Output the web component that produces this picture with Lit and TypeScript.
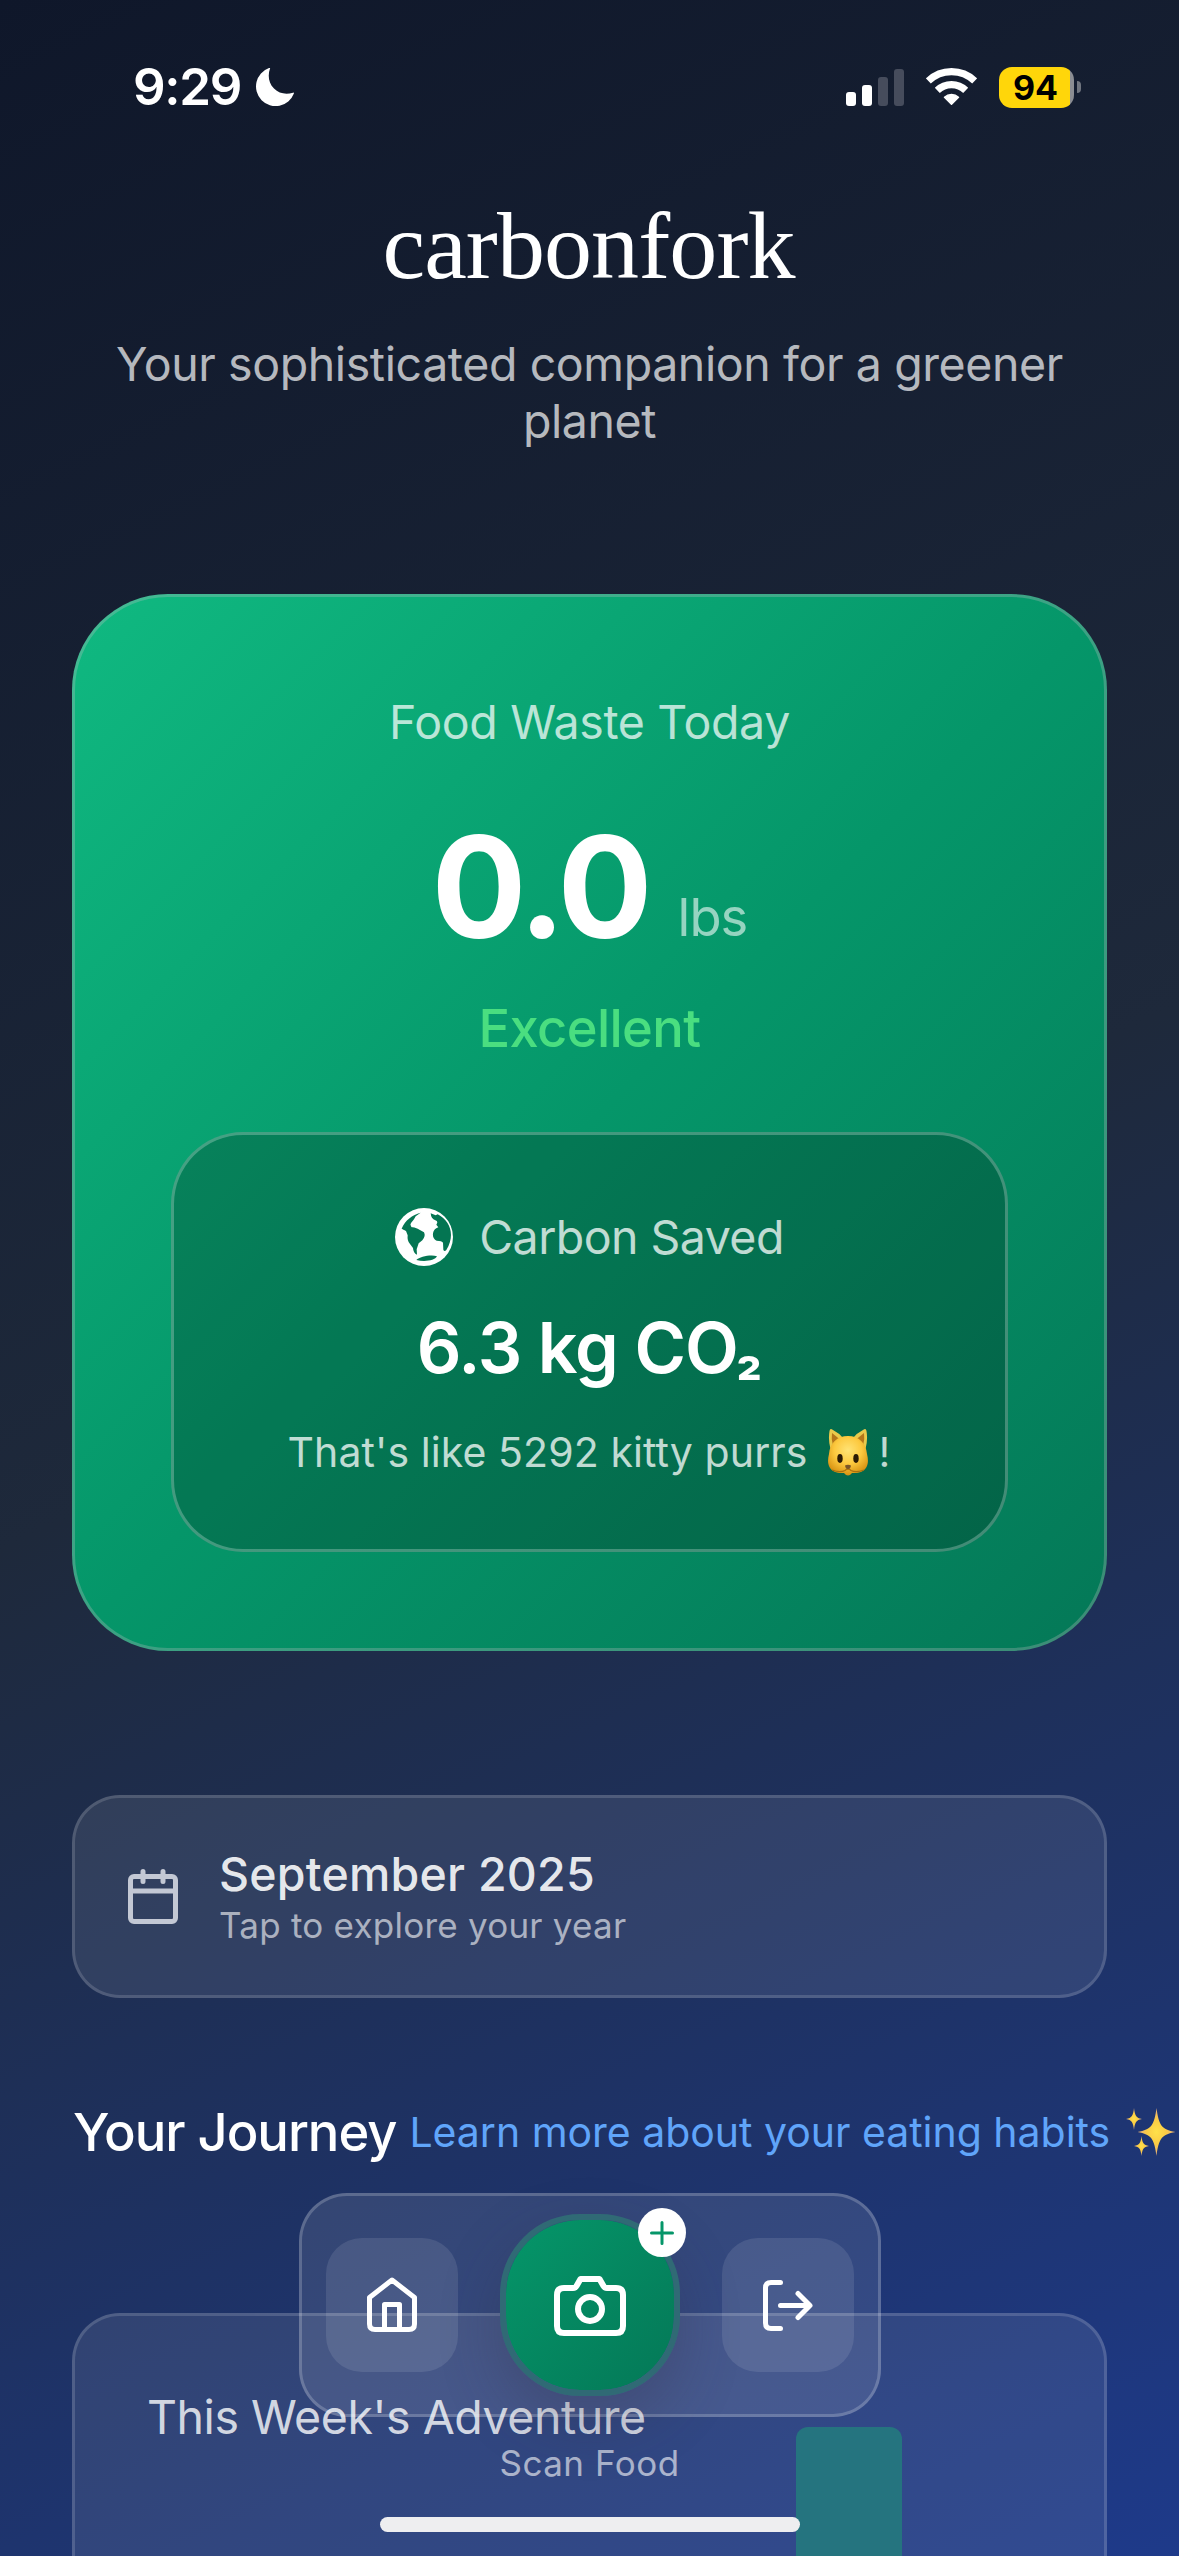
import { LitElement, html, css, svg } from "lit";
import { customElement } from "lit/decorators.js";

const moon = html`<svg class="moon" width="39" height="39" viewBox="0 0 39 39" fill="#fff">
  <path d="M15 .6C15.400-.2 14.600-.3 14 0A19.600 19.600 0 1 0 38.900 25.500C39 24.600 38.600 24.400 38 24.700C31 27 24 25.600 19 20.600C13.500 15.200 12.600 7.500 15 .6Z" /></svg>`;

const signal = html`<svg width="58" height="37" viewBox="0 0 58 37" fill="#fff">
  <rect x="0" y="23" width="10" height="14" rx="3" /><rect x="16" y="16" width="10" height="21" rx="3" />
  <rect x="32" y="8" width="10" height="29" rx="3" fill="#464c5c" /><rect x="48" y="0" width="10" height="37" rx="3" fill="#464c5c" /></svg>`;

const wifi = html`<svg width="51" height="38" viewBox="0 0 51 38" fill="none" stroke="#fff">
  <path d="M2.300 13A33.400 33.400 0 0 1 48.700 13" stroke-width="7.200" />
  <path d="M11.300 22.300A20.400 20.400 0 0 1 39.700 22.300" stroke-width="7.200" />
  <path d="M18.500 29.200A10.700 10.700 0 0 1 32.500 29.200L25.500 36.300Z" fill="#fff" stroke-width="1.500" stroke-linejoin="round" /></svg>`;

const globe = html`<svg width="58" height="58" viewBox="0 0 174 174">
  <circle cx="87" cy="87" r="87" fill="#fff" />
  <g fill="#047552">
    <path d="M77 14C52 20 30 37 20 62L35 66Q44 64 49 56Q44 50 48 45L57 34L62 25Z" />
    <path d="M20 62L36 58Q54 54 68 62L87 73Q93 84 82 97L71 106L65 124L66 140Q55 136 54 120L45 108Q36 99 38 82L33 69Z" />
    <path d="M107 16L122 22L128 19C165 38 182 80 154 126Q148 132 145 125L144 104Q141 98 125 98Q112 92 114 76Q116 63 130 58L124 50Q131 40 121 37Q108 32 107 16Z" />
    <path d="M64 156C74 146 108 139 126 145C120 158 88 162 64 156Z" />
  </g></svg>`;

const cat = html`<svg class="cat" width="42" height="48" viewBox="0 0 42 48">
  <defs>
    <radialGradient id="fur" cx="50%" cy="36%" r="62%"><stop offset="0" stop-color="#ffe375" /><stop offset=".55" stop-color="#fdc93f" /><stop offset="1" stop-color="#d99514" /></radialGradient>
  </defs>
  <path d="M2.500 3Q3-.5 6 2Q12 5 16 10H26Q30 5 36 2Q39-.5 39.500 3Q41 12 38.500 21H3.500Q1 12 2.500 3Z" fill="#e9c94b" />
  <path d="M5 5Q10 9 13.500 12L6 18Q4 11 5 5ZM37 5Q32 9 28.500 12L36 18Q38 11 37 5Z" fill="#b5761a" />
  <path d="M21 8C32 8 39 15 40 26C42 34 41 40 35 43.500C31 45.500 27 45 25 45Q21 50 17 45C15 45 11 45.500 7 43.500C1 40 0 34 2 26C3 15 10 8 21 8Z" fill="url(#fur)" />
  <path d="M5 42Q13 45 18 42.500L21 40L24 42.500Q29 45 37 42M21 40V42" fill="none" stroke="#a8700f" stroke-width="1.200" />
  <ellipse cx="13" cy="30.500" rx="2.700" ry="4.400" fill="#2c1a04" /><ellipse cx="29" cy="30.500" rx="2.700" ry="4.400" fill="#2c1a04" />
  <path d="M18 37.500Q21 36 24 37.500Q23.500 41 21 41Q18.500 41 18 37.500Z" fill="#7b5528" /></svg>`;

const star = (x: number, y: number, r: number, h: number) => svg`<path fill="url(#spark)"
  d=${`M${x} ${y - h}C${x + r * 0.12} ${y - h * 0.3} ${x + r * 0.25} ${y - h * 0.1} ${x + r} ${y}C${x + r * 0.25} ${y + h * 0.1} ${x + r * 0.12} ${y + h * 0.3} ${x} ${y + h}C${x - r * 0.12} ${y + h * 0.3} ${x - r * 0.25} ${y + h * 0.1} ${x - r} ${y}C${x - r * 0.25} ${y - h * 0.1} ${x - r * 0.12} ${y - h * 0.3} ${x} ${y - h}Z`} />`;

const sparkles = html`<svg class="sparkles" width="50" height="48" viewBox="0 0 50 48">
  <defs><radialGradient id="spark"><stop offset="0" stop-color="#ffe14a" /><stop offset=".5" stop-color="#fbcb45" /><stop offset="1" stop-color="#e8b080" /></radialGradient></defs>
  ${star(30.5, 24, 19, 24)}${star(8, 11, 8, 11)}${star(15.5, 38, 7.5, 10)}</svg>`;

const calendar = html`<svg class="calendar" width="50" height="55" viewBox="0 0 50 55" fill="none" stroke="#c3c8d4" stroke-width="5">
  <rect x="2.500" y="7.500" width="45" height="45" rx="3.500" /><path d="M3 22H47" /><path d="M15 2.500V12.500M35 2.500V12.500" stroke-linecap="round" /></svg>`;

const home = html`<svg width="50" height="56" viewBox="0 0 50 56" fill="none" stroke="#fff" stroke-width="5" stroke-linejoin="round">
  <path d="M2.500 20.500L25 3L47.500 20.500V47Q47.500 52.500 42 52.500H8Q2.500 52.500 2.500 47Z" /><path d="M17.500 52V27.500H32.500V52" /></svg>`;

const logout = html`<svg width="50" height="51" viewBox="0 0 50 51" fill="none" stroke="#fff" stroke-width="5" stroke-linecap="round" stroke-linejoin="round">
  <path d="M17.500 2.500H8Q2.500 2.500 2.500 8V43Q2.500 48.500 8 48.500H17.500" /><path d="M17.500 25.500H46.500M35 13.500L47 25.500L35 37.500" /></svg>`;

const camera = html`<svg class="camera" width="72" height="60" viewBox="0 0 72 60" fill="none" stroke="#fff" stroke-width="6" stroke-linejoin="round">
  <path d="M10 12H19Q21.500 12 22.500 10L26.500 3H45.500L49.500 10Q50.500 12 53 12H62Q69 12 69 19V50Q69 57 62 57H10Q3 57 3 50V19Q3 12 10 12Z" /><circle cx="36" cy="33" r="12" /></svg>`;

const plus = html`<svg width="24" height="24" viewBox="0 0 24 24" stroke="#059669" stroke-width="3" stroke-linecap="round"><path d="M12 1.500V22.500M1.500 12H22.500" /></svg>`;

@customElement("app-root")
export class AppRoot extends LitElement {
  static styles = css`
    :host {
      display: block;
      position: relative;
      width: 1179px;
      height: 2556px;
      overflow: hidden;
      box-sizing: border-box;
      background: linear-gradient(155.240deg, #0f172a 0%, #1e293b 50%, #1e3a8a 100%);
      color: #fff;
      font-family: Inter, "Liberation Sans", sans-serif;
      white-space: nowrap;
    }
    * { box-sizing: border-box; }
    svg { display: block; flex: none; }
    .page { display: flex; flex-direction: column; height: 2556px; }
    .page > * { flex-shrink: 0; }
    .status { display: flex; align-items: center; height: 118px; padding: 57px 98px 1px 133px; }
    .time { font: 600 51px/60px Inter, sans-serif; letter-spacing: -1.300px; }
    .moon { margin-left: 14px; }
    .indicators { display: flex; align-items: center; gap: 22px; margin-left: auto; }
    .battery { display: flex; align-items: center; gap: 3px; }
    .cell { width: 75px; height: 41px; border-radius: 13px; background: linear-gradient(90deg, #ffd60a 71px, #8b8d92 71px); color: #000;
      font: 700 34px/42px Inter, sans-serif; padding-left: 14px; }
    .nub { width: 4px; height: 12px; border-radius: 0 6px 6px 0; background: #70757f; }

    .hero { display: flex; flex-direction: column; align-items: center; margin-top: 78px; }
    .brand { margin: 0; padding-right: 2px; font: 400 96px/100px "Liberation Serif", serif; letter-spacing: -0.900px; }
    .tagline { margin: 40px 0 0; width: 1035px; white-space: normal; text-align: center; font-size: 46.500px; line-height: 57px;
      letter-spacing: -0.400px; color: rgba(255, 255, 255, 0.700); }

    .waste { margin: 144px 72px 0; height: 1057px; padding: 97px 96px 0; border: 3px solid rgba(205, 195, 200, 0.280); border-radius: 96px;
      background: linear-gradient(135deg, #10b981, #059669 50%, #047857) border-box; display: flex; flex-direction: column; align-items: center; }
    .label { font-size: 46.500px; line-height: 57px; letter-spacing: -0.330px; color: rgba(255, 255, 255, 0.720); }
    .amount { display: flex; align-items: baseline; margin-top: 51px; height: 170px; }
    .number { font-size: 141px; line-height: 170px; font-weight: 700; letter-spacing: -4px; }
    .unit { position: relative; top: -2px; margin-left: 29px; font-size: 52.500px; line-height: 64px; letter-spacing: -0.930px; color: rgba(255, 255, 255, 0.580); }
    .rating { margin-top: 24px; font-size: 52.500px; line-height: 64px; font-weight: 500; letter-spacing: -0.640px; color: #4ade80; }
    .carbon { align-self: stretch; margin-top: 72px; height: 420px; padding-top: 73px; border: 3px solid rgba(255, 255, 255, 0.250);
      border-radius: 72px; background: rgba(0, 0, 0, 0.200); display: flex; flex-direction: column; align-items: center; }
    .saved { display: flex; align-items: center; gap: 26px; height: 58px; font-size: 46.500px; letter-spacing: -0.550px; color: rgba(255, 255, 255, 0.750); }
    .kg { display: flex; margin-top: 39px; padding-right: 1px; font-size: 70px; line-height: 86px; font-weight: 600; letter-spacing: -1.050px; white-space: pre; }
    .sub { margin-left: -2px; font-size: 58px; line-height: 90px; height: 86px; font-weight: 700; }
    .purrs { display: flex; align-items: center; margin-top: 34px; padding-right: 1px; font-size: 41px; line-height: 54px; letter-spacing: 0.090px; color: rgba(255, 255, 255, 0.750); }
    .cat { margin: 0 10px 0 19px; }

    .month { margin: 144px 72px 0; height: 203px; display: flex; align-items: center; gap: 41px; padding-left: 53px;
      border: 3px solid rgba(255, 255, 255, 0.150); border-radius: 48px; background: rgba(255, 255, 255, 0.085); }
    .when { display: flex; flex-direction: column; gap: 1px; }
    .name { font-size: 46.500px; line-height: 57px; font-weight: 500; letter-spacing: 0.240px; color: rgba(255, 255, 255, 0.900); }
    .hint { font-size: 35px; line-height: 43px; letter-spacing: 0.240px; color: rgba(255, 255, 255, 0.600); }

    .journey { display: flex; align-items: center; margin-top: 102px; padding-left: 73px; height: 64px; }
    .heading { margin: 0; font-size: 52.500px; line-height: 64px; font-weight: 500; letter-spacing: -1.020px; }
    .learn { margin-left: 13px; font-size: 41px; line-height: 54px; letter-spacing: -0.020px; color: #60a5fa; }
    .sparkles { margin-left: 16px; }

    .week { flex: 1 0 0; margin: 149px 72px 0; padding: 73px 72px 0; border: 3px solid rgba(255, 255, 255, 0.150); border-bottom: 0;
      border-radius: 48px 48px 0 0; background: rgba(255, 255, 255, 0.085); }
    .title { margin: 0; font-size: 46.500px; line-height: 57px; font-weight: 400; letter-spacing: -0.460px; color: rgba(255, 255, 255, 0.800); }
    .chart { display: flex; margin-top: -19px; padding-left: 649px; height: 140px; }
    .bar { width: 106px; border-radius: 12px 12px 0 0; background: #25747f; }

    .dock { position: absolute; left: 0; right: 0; bottom: 0; height: 363px; display: flex; flex-direction: column; align-items: center; }
    .nav { display: flex; align-items: center; justify-content: center; gap: 42px; width: 582px; height: 224px; flex: none; margin-left: 1px;
      border: 3px solid rgba(255, 255, 255, 0.200); border-radius: 48px; background: rgba(255, 255, 255, 0.100); }
    .item { display: flex; align-items: center; justify-content: center; width: 132px; height: 134px; border-radius: 36px; background: rgba(255, 255, 255, 0.100); }
    .scan { position: relative; display: flex; align-items: center; justify-content: center; width: 180px; height: 182px; border-radius: 80px;
      border: 6px solid #306a75; background: linear-gradient(135deg, #059669, #047857) padding-box; box-shadow: 0 24px 60px 0 rgba(50, 45, 65, 0.300); }
    .camera { margin-top: 2px; }
    .badge { position: absolute; top: -12px; right: -12px; display: flex; align-items: center; justify-content: center; width: 48px; height: 49px;
      border-radius: 50%; background: #fff; }
    .caption { margin-top: 25px; font-size: 35px; line-height: 43px; letter-spacing: 0.500px; color: rgba(255, 255, 255, 0.600); }
    .handle { margin-top: 32px; width: 420px; height: 15px; border-radius: 8px; background: #eeeef0; flex: none; }
  `;

  render() {
    return html`
      <div class="page">
        <div class="status">
          <span class="time">9:29</span>${moon}
          <div class="indicators">
            ${signal}${wifi}
            <div class="battery"><div class="cell">94</div><div class="nub"></div></div>
          </div>
        </div>
        <header class="hero">
          <h1 class="brand">carbonfork</h1>
          <p class="tagline">Your sophisticated companion for a greener planet</p>
        </header>
        <section class="waste">
          <div class="label">Food Waste Today</div>
          <div class="amount"><span class="number">0.0</span><span class="unit">lbs</span></div>
          <div class="rating">Excellent</div>
          <div class="carbon">
            <div class="saved">${globe}<span>Carbon Saved</span></div>
            <div class="kg"><span>6.3 kg CO</span><span class="sub">₂</span></div>
            <div class="purrs"><span>That's like 5292 kitty purrs</span>${cat}<span>!</span></div>
          </div>
        </section>
        <section class="month">
          ${calendar}
          <div class="when"><div class="name">September 2025</div><div class="hint">Tap to explore your year</div></div>
        </section>
        <div class="journey">
          <h2 class="heading">Your Journey</h2>
          <span class="learn">Learn more about your eating habits</span>${sparkles}
        </div>
        <section class="week">
          <h3 class="title">This Week's Adventure</h3>
          <div class="chart"><div class="bar"></div></div>
        </section>
      </div>
      <div class="dock">
        <nav class="nav">
          <div class="item">${home}</div>
          <div class="scan">${camera}<div class="badge">${plus}</div></div>
          <div class="item">${logout}</div>
        </nav>
        <div class="caption">Scan Food</div>
        <div class="handle"></div>
      </div>`;
  }
}
